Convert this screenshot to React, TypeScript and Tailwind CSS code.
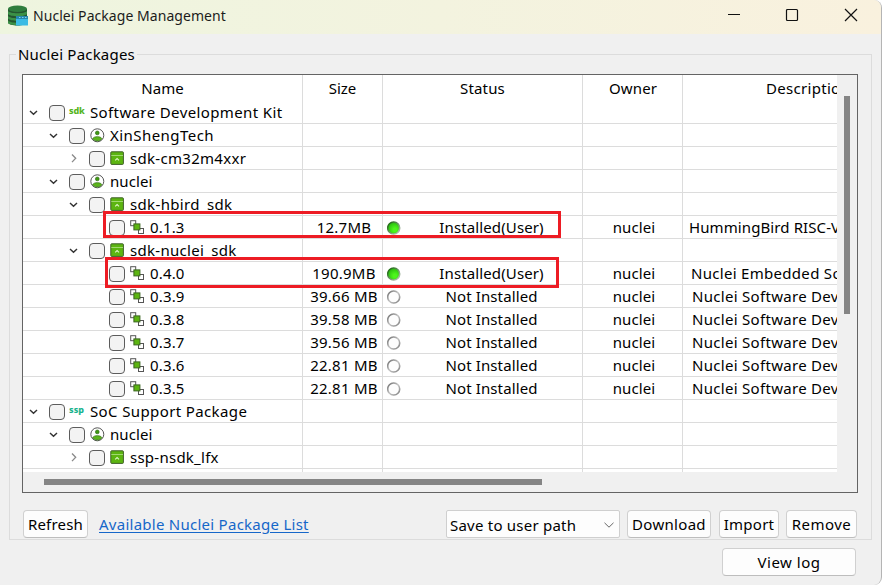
import React from "react";

type Kind = "sdk" | "ssp" | "user" | "package" | "version";

interface TreeRow {
  level: number;
  kind: Kind;
  label: string;
  open?: boolean;
  size?: string;
  installed?: boolean;
  description?: string;
  descClass?: string;
  labelClass?: string;
}

const SDK_TEXT = "Nuclei Software Development Kit";
const SDK_CLASS = "pl-[9px] tracking-[0.3px]";

const rows: TreeRow[] = [
  { level: 0, kind: "sdk", label: "Software Development Kit", open: true, labelClass: "tracking-[0.38px]" },
  { level: 1, kind: "user", label: "XinShengTech", open: true, labelClass: "tracking-[0.45px]" },
  { level: 2, kind: "package", label: "sdk-cm32m4xxr", open: false, labelClass: "tracking-[0.3px]" },
  { level: 1, kind: "user", label: "nuclei", open: true, labelClass: "tracking-[0.1px]" },
  { level: 2, kind: "package", label: "sdk-hbird_sdk", open: true, labelClass: "tracking-[0.35px]" },
  { level: 3, kind: "version", label: "0.1.3", size: "12.7MB", installed: true, description: "HummingBird RISC-V SDK", descClass: "pl-[6px] tracking-[0.1px]" },
  { level: 2, kind: "package", label: "sdk-nuclei_sdk", open: true, labelClass: "tracking-[0.3px]" },
  { level: 3, kind: "version", label: "0.4.0", size: "190.9MB", installed: true, description: "Nuclei Embedded Software", descClass: "pl-[8px] tracking-[0.3px]" },
  { level: 3, kind: "version", label: "0.3.9", size: "39.66 MB", installed: false, description: SDK_TEXT, descClass: SDK_CLASS },
  { level: 3, kind: "version", label: "0.3.8", size: "39.58 MB", installed: false, description: SDK_TEXT, descClass: SDK_CLASS },
  { level: 3, kind: "version", label: "0.3.7", size: "39.56 MB", installed: false, description: SDK_TEXT, descClass: SDK_CLASS },
  { level: 3, kind: "version", label: "0.3.6", size: "22.81 MB", installed: false, description: SDK_TEXT, descClass: SDK_CLASS },
  { level: 3, kind: "version", label: "0.3.5", size: "22.81 MB", installed: false, description: SDK_TEXT, descClass: SDK_CLASS },
  { level: 0, kind: "ssp", label: "SoC Support Package", open: true, labelClass: "tracking-[0.38px]" },
  { level: 1, kind: "user", label: "nuclei", open: true, labelClass: "tracking-[0.1px]" },
  { level: 2, kind: "package", label: "ssp-nsdk_lfx", open: false, labelClass: "tracking-[0.25px]" },
];

const indent = ["pl-[5px]", "pl-[25px]", "pl-[45px]", "pl-[65px]"];

function Chevron({ open }: { open?: boolean }) {
  if (open === undefined) return <span className="w-3 shrink-0" />;
  return (
    <svg viewBox="0 0 12 12" className="size-3 shrink-0" fill="none">
      {open ? (
        <path d="M2 4.900 5.500 8.300 9 4.900" stroke="#333" strokeWidth="1.400" />
      ) : (
        <path d="M4 2.500 7.700 6.300 4 10.100" stroke="#8a8a8a" strokeWidth="1.300" />
      )}
    </svg>
  );
}

function RowIcon({ kind }: { kind: Kind }) {
  if (kind === "sdk" || kind === "ssp") {
    return (
      <span
        className={
          "-mt-[3px] -ml-[0.5px] w-[16px] shrink-0 text-[9px] leading-none font-extrabold " +
          (kind === "sdk" ? "tracking-[-0.1px] text-[#55b51d]" : "tracking-[0.1px] text-[#19b38e]")
        }
      >
        {kind}
      </span>
    );
  }
  if (kind === "user") {
    return (
      <svg viewBox="0 0 15 15" className="size-[15px] shrink-0" fill="none">
        <circle cx="7.300" cy="7.300" r="6.500" fill="#fff" stroke="#555" strokeWidth="1" />
        <circle cx="7.300" cy="4.900" r="1.900" fill="#3f9a12" stroke="#2c6312" strokeWidth="0.600" />
        <path d="M2.700 10.600C4 8 10.600 8 11.900 10.600 10.600 13.800 4 13.800 2.700 10.600Z" fill="#5cb41c" stroke="#2f6d12" strokeWidth="0.700" />
      </svg>
    );
  }
  if (kind === "package") {
    return (
      <svg viewBox="0 0 15 15" className="size-[15px] shrink-0" fill="none">
        <rect x="0.800" y="0.800" width="12.600" height="12.600" rx="0.800" fill="#5cb511" stroke="#40602c" strokeWidth="1" />
        <path d="M1.300 4.500H13" stroke="#a9dc7c" strokeWidth="0.900" />
        <path d="M5.200 9.400 7.100 7.600 9 9.400" stroke="#dff5c8" strokeWidth="1.100" />
      </svg>
    );
  }
  return (
    <svg viewBox="0 0 15 15" className="size-[15px] shrink-0" fill="none">
      <rect x="0.700" y="0.700" width="5" height="5" fill="#fff" stroke="#555" />
      <rect x="8.500" y="8.500" width="5" height="5" fill="#fff" stroke="#555" />
      <rect x="3.900" y="3.900" width="6" height="6" fill="#5cb511" stroke="#3b6420" />
    </svg>
  );
}

function StatusDot({ on }: { on: boolean }) {
  return (
    <svg viewBox="0 0 14 14" className="mt-px size-[14px] shrink-0">
      <defs>
        <linearGradient id="ring-on" x1="0" y1="0" x2="1" y2="1">
          <stop offset="0.1" stopColor="#1c6a10" />
          <stop offset="0.85" stopColor="#a9b8a6" />
        </linearGradient>
        <linearGradient id="ring-off" x1="0" y1="0" x2="1" y2="1">
          <stop offset="0.1" stopColor="#7a7a7a" />
          <stop offset="0.5" stopColor="#c4c4c4" />
          <stop offset="0.9" stopColor="#8c8c8c" />
        </linearGradient>
        <radialGradient id="fill-on" cx="0.6" cy="0.65" r="0.7">
          <stop offset="0.2" stopColor="#4df51c" />
          <stop offset="1" stopColor="#23b50b" />
        </radialGradient>
      </defs>
      <circle cx="6.700" cy="7" r="6" fill={on ? "url(#fill-on)" : "#fdfdfd"} stroke={on ? "url(#ring-on)" : "url(#ring-off)"} strokeWidth="1.600" />
    </svg>
  );
}

const cell = "border-r border-[#dcdcdc] shrink-0 h-full flex items-center";

function Row({ row }: { row: TreeRow }) {
  return (
    <div className="flex h-[23px] shrink-0 border-b border-[#dcdcdc]">
      <div className={`${cell} w-[280px] ${indent[row.level]}`}>
        <Chevron open={row.open} />
        <span className="mt-px ml-[9px] size-4 shrink-0 rounded-[4px] border border-[#5c5c5c] bg-[#f3f3f3]" />
        <span className="ml-[4.5px] flex w-[20.5px] shrink-0 items-center">
          <RowIcon kind={row.kind} />
        </span>
        <span className={row.labelClass ?? "tracking-[0.15px]"}>{row.label}</span>
      </div>
      <div className={`${cell} w-[80px] justify-center pl-[3px] tracking-[0.25px]`}>{row.size}</div>
      <div className={`${cell} w-[200px] pl-1`}>
        {row.installed !== undefined && (
          <>
            <StatusDot on={row.installed} />
            <span className="flex-1 text-center tracking-[0.12px]">{row.installed ? "Installed(User)" : "Not Installed"}</span>
          </>
        )}
      </div>
      <div className={`${cell} w-[100px] justify-center pl-[3px] tracking-[0.1px]`}>{row.size && "nuclei"}</div>
      <div className={`flex shrink-0 items-center ${row.descClass ?? ""}`}>{row.description}</div>
    </div>
  );
}

const button =
  "flex h-7 shrink-0 items-center justify-center rounded-[4px] border border-[#d0d0d0] border-b-[#bdbdbd] bg-[#fdfdfd]";

export default function App() {
  return (
    <div className="relative flex h-[585px] w-[882px] flex-col overflow-hidden rounded-r-lg border-r border-[#b4b4b4] bg-[#f0f0f0] font-['Noto_Sans','Open_Sans',sans-serif] text-[15px] leading-5 whitespace-nowrap text-black">
      <header className="flex h-[34px] shrink-0 items-center bg-linear-to-r from-[#eef5df] via-[#f3f3df] to-[#f9f1de] pl-[7px]">
        <svg viewBox="0 0 22 22" className="mt-[-3px] size-[22px] shrink-0">
          <path d="M1 4V17.500C1 21.500 20 21.500 20 17.500V4Z" fill="#24552f" />
          <path d="M1 6C3 9 18 9 20 6V9C18 12 3 12 1 9Z" fill="#3b9146" />
          <path d="M1 11C3 14 18 14 20 11V13.500C18 16.500 3 16.500 1 13.500Z" fill="#3b9146" />
          <path d="M1 15.500C3 18.500 18 18.500 20 15.500V18C18 21 3 21 1 18Z" fill="#3b9146" />
          <ellipse cx="10.500" cy="3.800" rx="9.500" ry="3.200" fill="#2f7d3e" />
          <rect x="9" y="11" width="12" height="9.500" rx="0.500" fill="#3bbbe4" />
          <path d="M9 11H21V14H9Z" fill="#2587ad" />
          <path d="M12 12.500H13.500M15 12.500H16.500M18 12.500H19.500" stroke="#7fd4ed" strokeWidth="1" />
        </svg>
        <h1 className="mt-[-3px] ml-[4px] text-[14px] tracking-[0.05px] text-[#1c1c1c]">Nuclei Package Management</h1>
        <div className="mt-[-4px] mr-[23px] ml-auto flex items-center gap-[45px]">
          <svg viewBox="0 0 14 14" className="size-[14px]" stroke="#111" fill="none">
            <path d="M2 6.500H14" />
          </svg>
          <svg viewBox="0 0 14 14" className="size-[14px]" stroke="#111" fill="none">
            <rect x="1.500" y="1.500" width="11" height="11" rx="1" strokeWidth="1.200" />
          </svg>
          <svg viewBox="0 0 14 14" className="size-[14px]" stroke="#111" fill="none">
            <path d="M1 1 13 13M13 1 1 13" strokeWidth="1.200" />
          </svg>
        </div>
      </header>

      <fieldset className="mt-[10px] ml-[9px] flex h-[496px] w-[863px] shrink-0 flex-col border border-[#dcdcdc] pl-[12px]">
        <legend className="ml-[-6px] h-[20px] px-[2px] tracking-[0.2px]">Nuclei Packages</legend>
        <div className="mt-[10px] flex h-[419px] w-[836px] flex-col border border-[#646464]">
          <div className="relative flex h-[397px]">
            <div className="flex w-[814px] flex-col overflow-hidden bg-white">
              <div className="flex h-[26px] shrink-0">
                <div className={`${cell} w-[280px] justify-center`}>Name</div>
                <div className={`${cell} w-[80px] justify-center`}>Size</div>
                <div className={`${cell} w-[200px] justify-center tracking-[0.15px]`}>Status</div>
                <div className={`${cell} w-[100px] justify-center pl-px tracking-[0.15px]`}>Owner</div>
                <div className="flex shrink-0 items-center pl-[83px] tracking-[0.3px]">Description</div>
              </div>
              {rows.map((row, i) => (
                <Row key={i} row={row} />
              ))}
              <div className="flex flex-1">
                <div className={`${cell} w-[280px]`} />
                <div className={`${cell} w-[80px]`} />
                <div className={`${cell} w-[200px]`} />
                <div className={`${cell} w-[100px]`} />
              </div>
            </div>
            <div className="flex flex-1 justify-center pt-[21px]">
              <div className="h-[218px] w-[6px] bg-[#858585]" />
            </div>
            <div className="absolute top-[136px] left-[80px] h-[27px] w-[458px] border-3 border-[#ed1c24]" />
            <div className="absolute top-[182px] left-[82px] h-[31px] w-[454px] border-3 border-[#ed1c24]" />
          </div>
          <div className="flex flex-1 items-center pl-[21px]">
            <div className="h-[6px] w-[498px] bg-[#858585]" />
          </div>
        </div>
        <div className="mt-[17px] flex w-[835px] items-center pl-px">
          <button className={`${button} w-[65px] tracking-[0.2px]`}>Refresh</button>
          <a className="ml-[11px] tracking-[0.26px] text-[#1667c9] underline underline-offset-2">Available Nuclei Package List</a>
          <div className="ml-auto flex h-7 w-[174px] items-center justify-between rounded-[2px] border border-[#cfcfcf] bg-[#fdfdfd] pt-px pr-[4px] pl-[3px]">
            <span className="tracking-[0.23px]">Save to user path</span>
            <svg viewBox="0 0 12 12" className="size-3" fill="none">
              <path d="M1.500 3.800 6 8.200 10.500 3.800" stroke="#666" />
            </svg>
          </div>
          <button className={`${button} ml-[7px] w-[84px] tracking-[0.3px]`}>Download</button>
          <button className={`${button} ml-[8px] w-[60px] tracking-[0.25px]`}>Import</button>
          <button className={`${button} ml-[7px] w-[71px] tracking-[0.5px]`}>Remove</button>
        </div>
      </fieldset>
      <div className="mt-[8px] flex justify-end pr-[25px]">
        <button className={`${button} w-[134px] tracking-[0.5px]`}>View log</button>
      </div>
    </div>
  );
}
